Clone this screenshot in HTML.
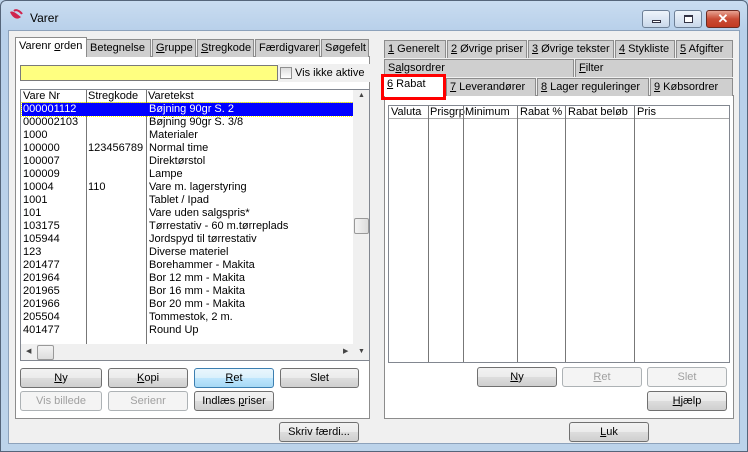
<!DOCTYPE html>
<html><head><meta charset="utf-8"><style>
*{box-sizing:border-box;margin:0;padding:0}
body{width:748px;height:452px;overflow:hidden;font-family:"Liberation Sans",sans-serif;font-size:11px;color:#000;background:#bcd3ea;position:relative}
.a{position:absolute}
.frame{left:0;top:0;width:748px;height:452px;border:1px solid #55657a;border-radius:6px 6px 0 0;background:linear-gradient(#c9dcf0,#b8d0ea 30px,#bcd3ea)}
.content{left:8px;top:30px;width:732px;height:414px;background:#f0f0f0;border:1px solid #8da2bb}
.tab{position:absolute;height:18px;border:1px solid #8c8c8c;border-bottom:none;padding:2px 3px 0;white-space:nowrap;background:#cfcfcf}
.sel{background:#fff}
.panel{position:absolute;background:#fff;border:1px solid #8c8c8c}
.btn{position:absolute;height:20px;border:1px solid #707070;border-radius:3px;background:linear-gradient(#f2f2f2 0,#ebebeb 50%,#dddddd 51%,#cfcfcf);text-align:center;line-height:18px}
.dis{color:#a0a0a0;border-color:#adb2b5;background:#f4f4f4}
.row{position:absolute;left:0;height:13px;line-height:13px;width:332px}
.row span{position:absolute}
u{text-decoration:underline}
</style></head><body>
<div class="a frame"></div>
<svg class="a" style="left:8px;top:9px" width="16" height="12" viewBox="0 0 16 12"><path d="M2 3 C5 1 9 5 13 8 C10 11 5 10 2 3Z" fill="#d0244e"/><path d="M6 2 C8 0 12 2 14 5" stroke="#d0244e" stroke-width="2" fill="none"/></svg>
<div class="a" style="left:30px;top:11px;font-size:12px">Varer</div>
<div class="a" style="left:642px;top:10px;width:28px;height:18px;border:1px solid #6d7f96;border-radius:3px;background:linear-gradient(#eef4fb,#c9d8ea)"><div class="a" style="left:9px;top:9px;width:9px;height:3px;background:#fff;border:1px solid #334"></div></div>
<div class="a" style="left:674px;top:10px;width:28px;height:18px;border:1px solid #6d7f96;border-radius:3px;background:linear-gradient(#eef4fb,#c9d8ea)"><div class="a" style="left:9px;top:4px;width:9px;height:8px;background:#fff;border:1px solid #334;border-top-width:2px"></div></div>
<div class="a" style="left:706px;top:10px;width:34px;height:18px;border:1px solid #6b2a22;border-radius:3px;background:linear-gradient(#e8a393,#c94b35 50%,#c23a22);color:#fff;font-weight:bold;text-align:center;line-height:16px;font-size:13px">&#10005;</div>
<div class="a content"></div>

<!-- left tabs -->
<div class="panel" style="left:15px;top:56px;width:355px;height:363px"></div>
<div class="tab" style="left:86px;top:39px;width:65px">Betegnelse</div>
<div class="tab" style="left:152px;top:39px;width:44px"><u>G</u>ruppe</div>
<div class="tab" style="left:197px;top:39px;width:57px"><u>S</u>tregkode</div>
<div class="tab" style="left:255px;top:39px;width:65px">Færdigvarer</div>
<div class="tab" style="left:321px;top:39px;width:48px">Søgefelt</div>
<div class="tab sel" style="left:15px;top:37px;width:72px;height:20px;border-bottom:none">Varenr <u>o</u>rden</div>
<div class="a" style="left:20px;top:65px;width:258px;height:16px;background:#ffff80;border:1px solid #7a7a7a"></div>
<div class="a" style="left:278px;top:64px;width:92px;height:18px;background:#f0f0f0"></div>
<div class="a" style="left:280px;top:67px;width:12px;height:12px;border:1px solid #8f8f8f;background:linear-gradient(#ddd,#fff)"></div>
<div class="a" style="left:295px;top:67px">Vis ikke aktive</div>

<div class="a" style="left:20px;top:89px;width:350px;height:272px;border:1px solid #828790;background:#fff;overflow:hidden">
 <div class="a" style="left:0;top:0;width:332px;height:13px;background:#fff;border-bottom:1px solid #aaa"></div>
 <div class="a" style="left:2px;top:0">Vare Nr</div><div class="a" style="left:67px;top:0">Stregkode</div><div class="a" style="left:127px;top:0">Varetekst</div>
 <div class="a" style="left:65px;top:0;width:1px;height:254px;background:#777"></div>
 <div class="a" style="left:125px;top:0;width:1px;height:254px;background:#777"></div>
 <div class="a" style="left:1px;top:13px;width:331px;height:13px;background:#0000ff;outline:1px dotted #ff0"></div>
 <div class="a" style="left:0;top:13px;line-height:13px">
 <div class="row" style="top:0;color:#fff"><span style="left:2px">000001112</span><span style="left:128px">Bøjning 90gr S. 2</span></div>
 <div class="row" style="top:13px"><span style="left:2px">000002103</span><span style="left:128px">Bøjning 90gr S. 3/8</span></div>
 <div class="row" style="top:26px"><span style="left:2px">1000</span><span style="left:128px">Materialer</span></div>
 <div class="row" style="top:39px"><span style="left:2px">100000</span><span style="left:67px">123456789</span><span style="left:128px">Normal time</span></div>
 <div class="row" style="top:52px"><span style="left:2px">100007</span><span style="left:128px">Direktørstol</span></div>
 <div class="row" style="top:65px"><span style="left:2px">100009</span><span style="left:128px">Lampe</span></div>
 <div class="row" style="top:78px"><span style="left:2px">10004</span><span style="left:67px">110</span><span style="left:128px">Vare m. lagerstyring</span></div>
 <div class="row" style="top:91px"><span style="left:2px">1001</span><span style="left:128px">Tablet / Ipad</span></div>
 <div class="row" style="top:104px"><span style="left:2px">101</span><span style="left:128px">Vare uden salgspris*</span></div>
 <div class="row" style="top:117px"><span style="left:2px">103175</span><span style="left:128px">Tørrestativ - 60 m.tørreplads</span></div>
 <div class="row" style="top:130px"><span style="left:2px">105944</span><span style="left:128px">Jordspyd til tørrestativ</span></div>
 <div class="row" style="top:143px"><span style="left:2px">123</span><span style="left:128px">Diverse materiel</span></div>
 <div class="row" style="top:156px"><span style="left:2px">201477</span><span style="left:128px">Borehammer - Makita</span></div>
 <div class="row" style="top:169px"><span style="left:2px">201964</span><span style="left:128px">Bor 12 mm - Makita</span></div>
 <div class="row" style="top:182px"><span style="left:2px">201965</span><span style="left:128px">Bor 16 mm - Makita</span></div>
 <div class="row" style="top:195px"><span style="left:2px">201966</span><span style="left:128px">Bor 20 mm - Makita</span></div>
 <div class="row" style="top:208px"><span style="left:2px">205504</span><span style="left:128px">Tommestok, 2 m.</span></div>
 <div class="row" style="top:221px"><span style="left:2px">401477</span><span style="left:128px">Round Up</span></div>
 </div>
 <div class="a" style="left:332px;top:0;width:17px;height:271px;background:#f0f0f0"></div>
 <div class="a" style="left:337px;top:2px;font-size:7px;color:#444">&#9650;</div>
 <div class="a" style="left:333px;top:128px;width:15px;height:16px;border:1px solid #999;border-radius:2px;background:linear-gradient(90deg,#f3f3f3,#ddd)"></div>
 <div class="a" style="left:337px;top:258px;font-size:7px;color:#444">&#9660;</div>
 <div class="a" style="left:0;top:254px;width:332px;height:17px;background:#f0f0f0"></div>
 <div class="a" style="left:5px;top:257px;font-size:7px;color:#444">&#9664;</div>
 <div class="a" style="left:16px;top:255px;width:17px;height:15px;border:1px solid #999;border-radius:2px;background:linear-gradient(#f3f3f3,#ddd)"></div>
 <div class="a" style="left:322px;top:257px;font-size:7px;color:#444">&#9654;</div>
</div>
<div class="btn" style="left:20px;top:368px;width:82px"><u>N</u>y</div>
<div class="btn" style="left:108px;top:368px;width:80px"><u>K</u>opi</div>
<div class="btn" style="left:194px;top:368px;width:80px;border-color:#3c7fb1;background:linear-gradient(#eaf6fd,#d9f0fc 50%,#bee6fd 51%,#a7d9f5)"><u>R</u>et</div>
<div class="btn" style="left:280px;top:368px;width:79px">Slet</div>
<div class="btn dis" style="left:20px;top:391px;width:82px">Vis billede</div>
<div class="btn dis" style="left:108px;top:391px;width:80px">Serienr</div>
<div class="btn" style="left:194px;top:391px;width:80px">Indlæs <u>p</u>riser</div>

<!-- right -->
<div class="panel" style="left:384px;top:95px;width:350px;height:324px"></div>
<div class="tab" style="left:384px;top:40px;width:62px;height:18px"><u>1</u> Generelt</div>
<div class="tab" style="left:447px;top:40px;width:80px;height:18px"><u>2</u> Øvrige priser</div>
<div class="tab" style="left:528px;top:40px;width:86px;height:18px"><u>3</u> Øvrige tekster</div>
<div class="tab" style="left:615px;top:40px;width:60px;height:18px"><u>4</u> Stykliste</div>
<div class="tab" style="left:676px;top:40px;width:57px;height:18px"><u>5</u> Afgifter</div>
<div class="tab" style="left:384px;top:59px;width:190px;height:18px">S<u>a</u>lgsordrer</div>
<div class="tab" style="left:575px;top:59px;width:158px;height:18px"><u>F</u>ilter</div>
<div class="tab" style="left:446px;top:78px;width:90px;height:18px"><u>7</u> Leverandører</div>
<div class="tab" style="left:537px;top:78px;width:112px;height:18px"><u>8</u> Lager reguleringer</div>
<div class="tab" style="left:650px;top:78px;width:83px;height:18px"><u>9</u> Købsordrer</div>
<div class="tab sel" style="left:384px;top:76px;width:60px;height:20px;border:none"><u>6</u> Rabat</div>
<div class="a" style="left:381px;top:74px;width:65px;height:26px;border:3px solid #f00"></div>

<div class="a" style="left:388px;top:105px;width:342px;height:258px;border:1px solid #828790;background:#fff">
 <div class="a" style="left:0;top:0;width:340px;height:13px;border-bottom:1px solid #aaa"></div>
 <div class="a" style="left:2px;top:0">Valuta</div>
 <div class="a" style="left:41px;top:0">Prisgrp</div>
 <div class="a" style="left:76px;top:0">Minimum</div>
 <div class="a" style="left:131px;top:0">Rabat %</div>
 <div class="a" style="left:179px;top:0">Rabat beløb</div>
 <div class="a" style="left:248px;top:0">Pris</div>
 <div class="a" style="left:39px;top:0;width:1px;height:256px;background:#777"></div>
 <div class="a" style="left:74px;top:0;width:1px;height:256px;background:#777"></div>
 <div class="a" style="left:128px;top:0;width:1px;height:256px;background:#777"></div>
 <div class="a" style="left:176px;top:0;width:1px;height:256px;background:#777"></div>
 <div class="a" style="left:245px;top:0;width:1px;height:256px;background:#777"></div>
</div>
<div class="btn" style="left:477px;top:367px;width:80px"><u>N</u>y</div>
<div class="btn dis" style="left:562px;top:367px;width:80px"><u>R</u>et</div>
<div class="btn dis" style="left:647px;top:367px;width:80px">Slet</div>
<div class="btn" style="left:647px;top:391px;width:80px"><u>H</u>jælp</div>

<div class="btn" style="left:279px;top:422px;width:80px">Skriv færdi...</div>
<div class="btn" style="left:569px;top:422px;width:80px"><u>L</u>uk</div>
</body></html>
